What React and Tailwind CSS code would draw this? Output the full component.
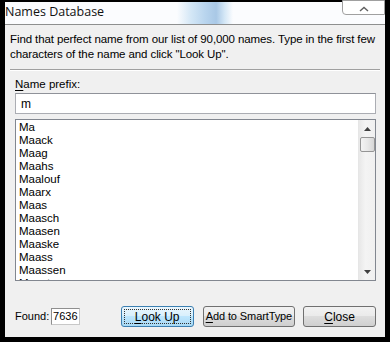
import React from "react";

const names = [
  "Ma","Maack","Maag","Maahs","Maalouf","Maarx","Maas","Maasch","Maasen","Maaske","Maass","Maassen","Maast","Maat",
];

function U({ children }) {
  return <span className="underline underline-offset-[2px]">{children}</span>;
}

export default function App() {
  return (
    <div
      className="w-[390px] h-[342px] bg-black pt-[2px] pl-[5px] pr-[5px] pb-[5px] overflow-hidden"
      style={{ fontFamily: '"Liberation Sans", Arial, sans-serif' }}
    >
      <div className="w-[380px] h-[335px] bg-[#f0f0f0] flex flex-col text-[12px] text-black">
        {/* title bar */}
        <div className="relative h-[23px] shrink-0 bg-[#fbfcfe] border-b border-[#8e8f8f] flex items-center">
          <div className="absolute left-[172px] top-0 w-[56px] h-[22px] bg-[linear-gradient(90deg,rgba(210,230,246,0)_0%,#d4e7f6_25%,#b9d5ee_50%,#a9c8e6_70%,#d4e7f6_85%,rgba(210,230,246,0)_100%)]" />
          <span className="relative text-[12.5px] leading-none -mt-[1px] text-[#111]" style={{ fontFamily: '"Open Sans", "Liberation Sans", sans-serif' }}>
            Names Database
          </span>
          <div className="absolute left-[337px] top-[-2px] w-[43px] h-[15px] bg-white border border-[#a0a0a0] rounded-bl-[4px] flex items-center justify-center">
            <svg width="10" height="6" viewBox="0 0 10 6" className="mt-[2px]">
              <path d="M1 5 L5 1.5 L9 5" fill="none" stroke="#606060" strokeWidth="1.4" />
            </svg>
          </div>
        </div>

        {/* body */}
        <div className="flex flex-col px-[5px]">
          <p className="mt-[7px] leading-[15px] text-[11.5px] pl-0 tracking-[-0.1px]">
            Find that perfect name from our list of 90,000 names. Type in the first few characters of the name and click "Look Up".
          </p>
          <div className="mt-[7px] border-t border-[#a0a0a0] border-b border-b-white" />

          <div className="pl-[5px] pr-[4px] flex flex-col">
            <label className="mt-[6px] text-[11.5px] leading-[14px]">
              <U>N</U>ame prefix:
            </label>
            <div className="mt-[2px] h-[21px] bg-white border border-[#abadb3] border-t-[#8f9299] flex items-center pl-[5px] text-[12px]">
              m
            </div>

            <div className="mt-[5px] h-[162px] bg-white border border-[#828790] flex overflow-hidden">
              <div className="flex-1 flex flex-col pl-[3px] pt-[1px] overflow-hidden">
                {names.map((n) => (
                  <div key={n} className="h-[13px] leading-[13px] text-[11.5px] shrink-0">
                    {n}
                  </div>
                ))}
              </div>
              <div className="w-[17px] shrink-0 bg-[linear-gradient(90deg,#e8e8e8,#f4f4f4_40%,#f0f0f0)] border-l border-[#e6e6e6] flex flex-col items-center">
                <div className="h-[17px] w-full flex items-center justify-center">
                  <svg width="7" height="4" viewBox="0 0 7 4">
                    <path d="M0 4 L3.5 0 L7 4 Z" fill="#404040" />
                  </svg>
                </div>
                <div className="w-[15px] h-[15px] rounded-[2px] border border-[#959595] bg-[linear-gradient(90deg,#f3f3f3,#e8e8e8_50%,#d6d6d6)]" />
                <div className="flex-1" />
                <div className="h-[17px] w-full flex items-center justify-center">
                  <svg width="7" height="4" viewBox="0 0 7 4">
                    <path d="M0 0 L7 0 L3.5 4 Z" fill="#404040" />
                  </svg>
                </div>
              </div>
            </div>

            {/* bottom row */}
            <div className="mt-[25px] flex items-center h-[21px]">
              <span className="text-[11px] w-[36px] whitespace-nowrap">Found:</span>
              <div className="w-[29px] h-[17px] bg-white border border-[#c8c8c8] border-t-[#8f8f8f] border-l-[#8f8f8f] flex items-center justify-center text-[11px]">
                7636
              </div>
              <button className="ml-[41px] w-[73px] h-[21px] rounded-[3px] border border-[#3c7fb1] bg-[linear-gradient(180deg,#eaf6fd_0%,#d9f0fc_45%,#bee6fd_50%,#a7d9f5_100%)] p-[2px] text-[12px]">
                <div className="w-full h-full border border-dotted border-[#333] flex items-center justify-center leading-none">
                  <span><U>L</U>ook Up</span>
                </div>
              </button>
              <button className="ml-[9px] w-[93px] h-[21px] rounded-[3px] border border-[#707070] bg-[linear-gradient(180deg,#f2f2f2_0%,#ebebeb_45%,#dddddd_50%,#cfcfcf_100%)] flex items-center justify-center text-[11px] tracking-[-0.1px] leading-none whitespace-nowrap">
                <span><U>A</U>dd to SmartType</span>
              </button>
              <button className="ml-[8px] w-[73px] h-[21px] rounded-[3px] border border-[#707070] bg-[linear-gradient(180deg,#f2f2f2_0%,#ebebeb_45%,#dddddd_50%,#cfcfcf_100%)] flex items-center justify-center text-[12px] leading-none">
                <span><U>C</U>lose</span>
              </button>
            </div>
          </div>
        </div>
      </div>
    </div>
  );
}
